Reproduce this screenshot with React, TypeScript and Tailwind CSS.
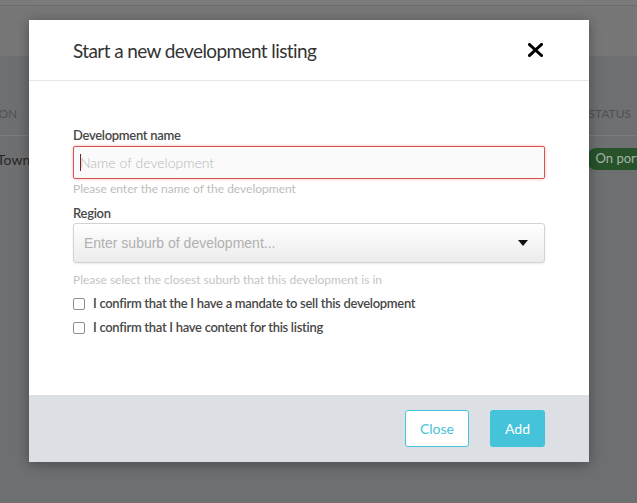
const lato = { fontFamily: "Lato, 'Noto Sans', sans-serif" };

export default function App() {
  return (
    <div className="relative h-[503px] w-[637px] overflow-hidden bg-[#6e6f71]" style={lato}>
      {/* page behind the overlay */}
      <div className="h-[6px] border-b border-[#6b6b6b] bg-[#7a7a7a]" />
      <div className="h-[50px] bg-[#777777]" />
      <div className="flex h-[80px] items-end justify-between border-b border-[#7b7c7e] pb-[12px] text-[12px] uppercase text-[#4f5052]">
        <span className="-ml-[12px]">tion</span>
        <span className="mr-[6px]">Status</span>
      </div>
      <div className="flex h-[46px] items-center justify-between">
        <span className="-ml-[3px] mt-[1px] text-[14px] text-[#262626]">Town</span>
        <span className="-mr-[23px] rounded-full bg-[#27522a] px-[10px] py-[1px] text-[13px] text-[#a9b3a8]">
          On portal
        </span>
      </div>

      {/* modal */}
      <div className="absolute inset-0 pl-[29px] pt-[20px]">
        <div className="w-[560px] bg-white shadow-[0_2px_12px_rgba(0,0,0,0.35)]">
          <div className="flex h-[61px] items-center justify-between border-b border-[#e6e6e6] px-[44px]">
            <h2 className="text-[19px] leading-none tracking-[-0.6px] text-[#333333]">
              Start a new development listing
            </h2>
            <svg width="15" height="14" viewBox="0 0 15 14" className="mr-[2px]">
              <path d="M1.5 1.5 L13.5 12.5 M13.5 1.5 L1.5 12.5" stroke="#000" strokeWidth="3" strokeLinecap="square" />
            </svg>
          </div>

          <div className="h-[314px] px-[44px] pt-[45px]">
            <label className="block text-[13px] leading-[18px] font-semibold tracking-[-0.3px] text-[#474747]">
              Development name
            </label>
            <div className="relative mt-[2px]">
              <input
                className="h-[33px] w-full rounded-[2px] border border-[#d9534f] bg-[#fafafa] pl-[6px] text-[14px] font-light text-[#555] shadow-[0_0_3px_rgba(217,83,79,0.45)] outline-none placeholder:text-[#b8b8b8]"
                style={lato}
                placeholder="Name of development"
              />
              <span className="absolute left-[7px] top-[8px] h-[17px] w-[1px] bg-[#6b2a2a]" />
            </div>
            <p className="mt-[2px] text-[12px] leading-[16px] text-[#bdbdbd]">Please enter the name of the development</p>

            <label className="mt-[7px] block text-[13px] leading-[18px] font-semibold tracking-[-0.3px] text-[#474747]">
              Region
            </label>
            <div className="mt-[1px] flex h-[40px] items-center justify-between rounded-[3px] border border-[#d3d3d3] bg-gradient-to-b from-white to-[#ececec] pl-[10px] pr-[16px] shadow-[0_1px_2px_rgba(0,0,0,0.08)]">
              <span className="text-[14px] text-[#b0b0b0]" style={{ fontFamily: "'Liberation Sans', Arial, sans-serif" }}>
                Enter suburb of development...
              </span>
              <svg width="10" height="6" viewBox="0 0 10 6">
                <path d="M0 0 L10 0 L5 6 Z" fill="#111" />
              </svg>
            </div>
            <p className="mt-[9px] text-[12px] leading-[16px] text-[#c4c4c4]">
              Please select the closest suburb that this development is in
            </p>

            <div className="mt-[7px] flex flex-col gap-[6px]">
              {[
                "I confirm that the I have a mandate to sell this development",
                "I confirm that I have content for this listing",
              ].map((text) => (
                <label
                  key={text}
                  className="flex h-[18px] items-center gap-[8px] text-[13px] font-semibold tracking-[-0.3px] text-[#474747]"
                >
                  <span className="h-[12px] w-[12px] rounded-[2px] border border-[#8f8f8f] bg-white" />
                  {text}
                </label>
              ))}
            </div>
          </div>

          <div className="flex h-[67px] items-center justify-end gap-[21px] bg-[#dcdfe3] px-[44px]">
            <button className="h-[37px] w-[64px] rounded-[3px] border border-[#45c3da] bg-white text-[14px] text-[#45c3da]">
              Close
            </button>
            <button className="h-[37px] w-[55px] rounded-[3px] bg-[#45c3da] text-[14px] text-white">Add</button>
          </div>
        </div>
      </div>
    </div>
  );
}
